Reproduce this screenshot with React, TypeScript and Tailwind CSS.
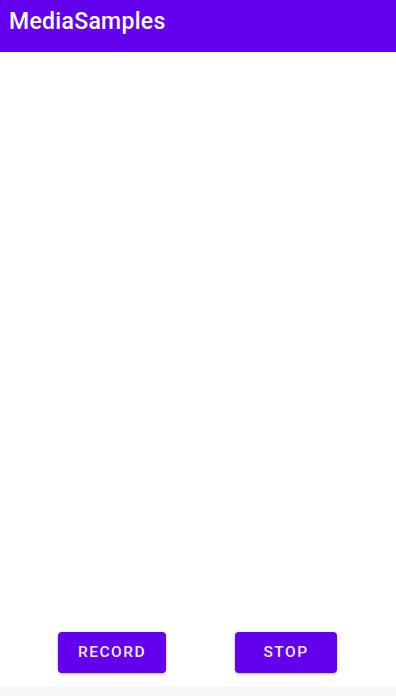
export default function App() {
  return (
    <div className="flex h-[696px] w-[396px] flex-col bg-white font-['Roboto',sans-serif]">
      <header className="flex h-[52px] items-start bg-[#6200ee] px-[9px] pt-[7px]">
        <h1 className="text-[23px] leading-[30px] font-medium tracking-[0.3px] text-white">MediaSamples</h1>
      </header>
      <main className="flex-1" />
      <div className="flex h-[56px] items-start pt-[1px]">
        <button className="ml-[58px] h-[41px] w-[108px] rounded-[4px] bg-[#6200ee] pt-[1px] text-[15.5px] font-medium tracking-[1.5px] text-[#f3eefc] shadow-[0_1px_3px_rgba(0,0,0,0.3)]">
          RECORD
        </button>
        <button className="ml-[69px] h-[41px] w-[102px] rounded-[4px] bg-[#6200ee] pt-[1px] text-[15.5px] font-medium tracking-[1.5px] text-[#f3eefc] shadow-[0_1px_3px_rgba(0,0,0,0.3)]">
          STOP
        </button>
      </div>
      <div className="h-[9px] bg-[#f6f6f6]" />
    </div>
  )
}
